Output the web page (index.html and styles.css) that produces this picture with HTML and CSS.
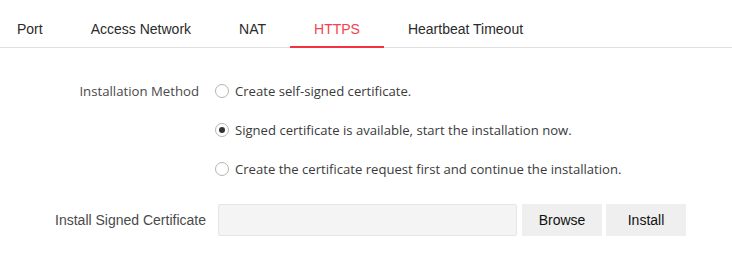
FILE: index.html
```html
<!DOCTYPE html>
<html lang="en">
<head>
    <meta charset="UTF-8">
    <title>HTTPS</title>
    <link rel="stylesheet" href="styles.css">
</head>
<body>
    <div class="tabs">
        <div class="tab first">Port</div>
        <div class="tab">Access Network</div>
        <div class="tab">NAT</div>
        <div class="tab active">HTTPS</div>
        <div class="tab">Heartbeat Timeout</div>
    </div>

    <div class="form">
        <div class="row">
            <div class="label seg">Installation Method</div>
            <div class="radios">
                <label class="radio"><span class="circle"></span>Create self-signed certificate.</label>
                <label class="radio"><span class="circle checked"></span>Signed certificate is available, start the installation now.</label>
                <label class="radio"><span class="circle"></span>Create the certificate request first and continue the installation.</label>
            </div>
        </div>
        <div class="row install">
            <div class="label">Install Signed Certificate</div>
            <div class="file-input"></div>
            <button class="btn">Browse</button>
            <button class="btn">Install</button>
        </div>
    </div>
</body>
</html>
```

FILE: styles.css
```css
* {
    margin: 0;
    padding: 0;
    box-sizing: border-box;
}
body {
    background: #fff;
    font-family: "Liberation Sans", Arial, sans-serif;
    font-size: 14px;
    color: #333;
    width: 732px;
    height: 263px;
    overflow: hidden;
}
.tabs {
    display: flex;
    margin-top: 10px;
    border-bottom: 1px solid #e0e0e0;
}
.tab {
    padding: 11px 24px 0 24px;
    height: 38px;
    color: #2b2b2b;
    border-bottom: 2px solid transparent;
    margin-bottom: -1px;
}
.tab.first {
    padding-left: 17px;
}
.tab.active {
    color: #f5424f;
    border-bottom-color: #f5303f;
}
.form {
    padding-top: 34px;
}
.row {
    display: flex;
}
.label {
    width: 206px;
    text-align: right;
    color: #4a4a4a;
    flex-shrink: 0;
}
.label.seg {
    width: 199px;
    margin-right: 7px;
    font-family: "Open Sans", "Noto Sans", sans-serif;
    font-size: 13.2px;
    line-height: 18px;
}
.radios {
    display: flex;
    flex-direction: column;
    gap: 21px;
    padding-left: 9px;
}
.radio {
    display: flex;
    align-items: center;
    font-family: "Open Sans", "Noto Sans", sans-serif;
    font-size: 13.1px;
    line-height: 18px;
    color: #3a3a3a;
}
.circle {
    width: 14px;
    height: 14px;
    border: 1px solid #b5b5b5;
    border-radius: 50%;
    margin-right: 6px;
    position: relative;
}
.circle.checked::after {
    content: "";
    position: absolute;
    left: 3px;
    top: 3px;
    width: 6px;
    height: 6px;
    border-radius: 50%;
    background: #333;
}
.install {
    margin-top: 26px;
    align-items: center;
}
.install .label {
    width: 206px;
    margin-right: 12px;
}
.file-input {
    width: 299px;
    height: 32px;
    background: #f4f4f4;
    border: 1px solid #e6e6e6;
    border-radius: 2px;
}
.btn {
    width: 80px;
    height: 32px;
    margin-left: 4px;
    background: #efefef;
    border: none;
    font-family: "Liberation Sans", Arial, sans-serif;
    font-size: 14px;
    color: #111;
}
.file-input + .btn {
    margin-left: 5px;
}
```
